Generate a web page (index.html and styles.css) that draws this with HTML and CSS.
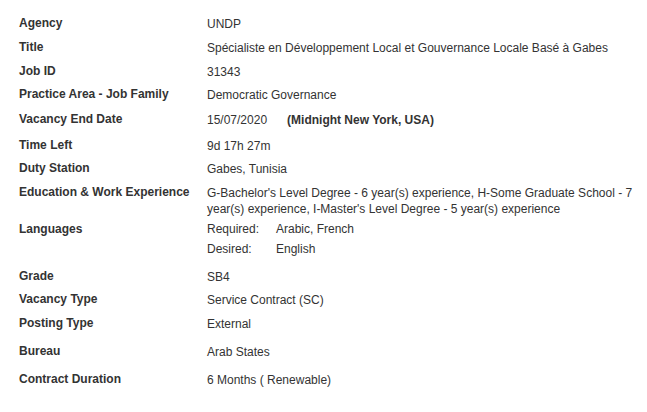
FILE: index.html
```html
<!DOCTYPE html>
<html>
<head>
<meta charset="utf-8">
<link rel="stylesheet" href="styles.css">
</head>
<body>
<div class="details">
  <div class="row h24"><div class="label">Agency</div><div class="value">UNDP</div></div>
  <div class="row h24"><div class="label">Title</div><div class="value">Spécialiste en Développement Local et Gouvernance Locale Basé à Gabes</div></div>
  <div class="row h23"><div class="label">Job ID</div><div class="value">31343</div></div>
  <div class="row h25"><div class="label">Practice Area - Job Family</div><div class="value">Democratic Governance</div></div>
  <div class="row h26"><div class="label">Vacancy End Date</div><div class="value">15/07/2020<span class="note">(Midnight New York, USA)</span></div></div>
  <div class="row h23"><div class="label">Time Left</div><div class="value">9d 17h 27m</div></div>
  <div class="row h24"><div class="label">Duty Station</div><div class="value">Gabes, Tunisia</div></div>
  <div class="row h37"><div class="label">Education &amp; Work Experience</div><div class="value">G-Bachelor's Level Degree - 6 year(s) experience, H-Some Graduate School - 7 year(s) experience, I-Master's Level Degree - 5 year(s) experience</div></div>
  <div class="row h47"><div class="label">Languages</div>
    <div class="value langs">
      <div class="lang"><span class="lang-kind">Required:</span><span>Arabic, French</span></div>
      <div class="lang"><span class="lang-kind">Desired:</span><span>English</span></div>
    </div>
  </div>
  <div class="row h23"><div class="label">Grade</div><div class="value">SB4</div></div>
  <div class="row h24"><div class="label">Vacancy Type</div><div class="value">Service Contract (SC)</div></div>
  <div class="row h28"><div class="label">Posting Type</div><div class="value">External</div></div>
  <div class="row h28"><div class="label">Bureau</div><div class="value">Arab States</div></div>
  <div class="row h24"><div class="label">Contract Duration</div><div class="value">6 Months ( Renewable)</div></div>
</div>
</body>
</html>
```

FILE: styles.css
```css
html, body {
  margin: 0;
  padding: 0;
  background: #ffffff;
}

body {
  font-family: "Liberation Sans", Arial, sans-serif;
  font-size: 12px;
  line-height: 16px;
  color: #333333;
}

.details {
  padding: 15px 9px 0 19px;
  display: flex;
  flex-direction: column;
}

.row {
  display: grid;
  grid-template-columns: 188px 1fr;
  align-items: start;
}

.h23 { height: 23px; }
.h24 { height: 24px; }
.h25 { height: 25px; }
.h26 { height: 26px; }
.h28 { height: 28px; }
.h37 { height: 37px; }
.h47 { height: 47px; }

.label {
  font-weight: bold;
}

.value {
  padding-top: 1px;
}

.note {
  font-weight: bold;
  margin-left: 20px;
}

.langs {
  display: flex;
  flex-direction: column;
  gap: 4px;
  padding-top: 0;
}

.lang {
  display: grid;
  grid-template-columns: 69px 1fr;
}
```
